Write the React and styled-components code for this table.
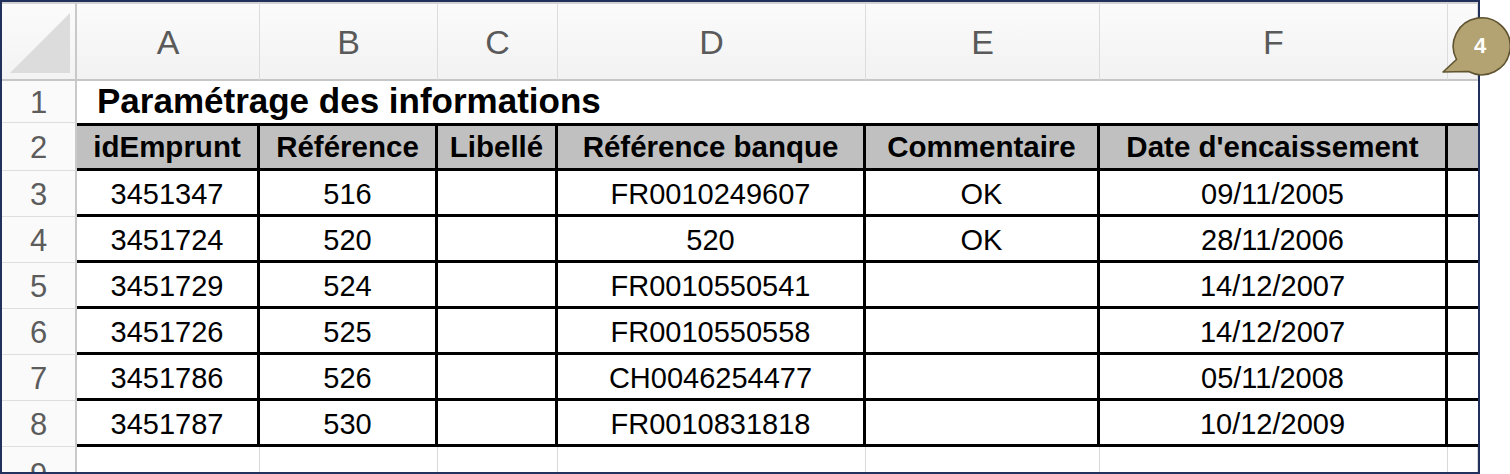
import React from 'react';
import styled, { createGlobalStyle } from 'styled-components';

const GlobalStyle = createGlobalStyle`
  body {
    margin: 0;
    background: #ffffff;
    font-family: "Liberation Sans", Arial, sans-serif;
  }
`;

const letters = ['A', 'B', 'C', 'D', 'E', 'F', ''];
const headers = [
  'idEmprunt',
  'Référence',
  'Libellé',
  'Référence banque',
  'Commentaire',
  "Date d'encaissement",
  '',
];
const rows = [
  ['3451347', '516', '', 'FR0010249607', 'OK', '09/11/2005', ''],
  ['3451724', '520', '', '520', 'OK', '28/11/2006', ''],
  ['3451729', '524', '', 'FR0010550541', '', '14/12/2007', ''],
  ['3451726', '525', '', 'FR0010550558', '', '14/12/2007', ''],
  ['3451786', '526', '', 'CH0046254477', '', '05/11/2008', ''],
  ['3451787', '530', '', 'FR0010831818', '', '10/12/2009', ''],
];

function App() {
  const lastCol = letters.length - 1;
  return (
    <Page>
      <GlobalStyle />
      <Sheet>
        <Corner>
          <svg width="64" height="64" viewBox="0 0 64 64">
            <polygon points="62,2 62,62 2,62" fill="#dcdcdc" />
          </svg>
        </Corner>
        {letters.map((l, i) => (
          <ColHead key={`h${i}`}>{l}</ColHead>
        ))}

        <RowHead>1</RowHead>
        <Title>Paramétrage des informations</Title>

        <RowHead>2</RowHead>
        {headers.map((h, i) => (
          <TableCell key={`t${i}`} $head $top $last={i === lastCol}>
            {h}
          </TableCell>
        ))}

        {rows.map((r, ri) => (
          <React.Fragment key={`r${ri}`}>
            <RowHead>{ri + 3}</RowHead>
            {r.map((v, ci) => (
              <TableCell key={`c${ci}`} $last={ci === lastCol}>
                {v}
              </TableCell>
            ))}
          </React.Fragment>
        ))}

        <RowHead $cut>9</RowHead>
        {letters.map((l, i) => (
          <EmptyCell key={`e${i}`} />
        ))}
      </Sheet>
      <Badge>
        <svg width="72" height="70" viewBox="0 0 72 70">
          <path
            d="M 18.5 49.5 A 28.5 28.5 0 1 1 30.5 61.5 L 5 62 Z"
            fill="#b3a373"
            stroke="#5f5330"
            strokeWidth="1.6"
            strokeLinejoin="round"
          />
          <text
            x="42"
            y="43"
            textAnchor="middle"
            fill="#ffffff"
            fontFamily="Liberation Sans, Arial, sans-serif"
            fontWeight="700"
            fontSize="22"
          >
            4
          </text>
        </svg>
      </Badge>
    </Page>
  );
}

const Page = styled.div`
  position: relative;
  width: 1510px;
  height: 474px;
  overflow: hidden;
`;
const Sheet = styled.div`
  box-sizing: border-box;
  width: 1480px;
  height: 474px;
  border: 2px solid #22305c;
  display: grid;
  grid-template-columns: 75px 183px 178px 120px 308px 234px 348px 1fr;
  grid-template-rows: 79px 42px 48px repeat(6, 46px) 1fr;
  overflow: hidden;
  background: #ffffff;
`;
const Corner = styled.div`
  box-sizing: border-box;
  background: linear-gradient(#fbfbfb, #f3f3f3);
  border-top: 2px solid #d2d2d2;
  border-right: 2px solid #c9c9c9;
  border-bottom: 2px solid #c6c6c6;
  display: flex;
  align-items: flex-end;
  justify-content: flex-end;
  padding: 0 3px 4px 0;
`;
const ColHead = styled.div`
  box-sizing: border-box;
  background: linear-gradient(#fbfbfb, #f2f2f2);
  border-top: 2px solid #d2d2d2;
  border-right: 1px solid #dcdcdc;
  border-bottom: 2px solid #c6c6c6;
  display: flex;
  align-items: center;
  justify-content: center;
  font-size: 34px;
  color: #5a5a5a;
  padding-top: 2px;
`;
const RowHead = styled.div`
  box-sizing: border-box;
  background: #fafafa;
  border-right: 2px solid #c9c9c9;
  border-bottom: 1px solid #dedede;
  display: flex;
  align-items: ${(p) => (p.$cut ? 'flex-start' : 'center')};
  justify-content: center;
  font-size: 31px;
  color: #5c5c5c;
  padding-top: ${(p) => (p.$cut ? '10px' : '2px')};
`;
const Title = styled.div`
  grid-column: 2 / -1;
  display: flex;
  align-items: flex-end;
  padding: 0 0 2px 20px;
  font-size: 35px;
  font-weight: 700;
  color: #000000;
  white-space: nowrap;
`;
const TableCell = styled.div`
  box-sizing: border-box;
  background: ${(p) => (p.$head ? '#c0c0c0' : '#ffffff')};
  border-top: ${(p) => (p.$top ? '3px solid #000' : 'none')};
  border-bottom: 3px solid #000;
  border-right: ${(p) => (p.$last ? 'none' : '3px solid #000')};
  display: flex;
  align-items: center;
  justify-content: center;
  font-size: ${(p) => (p.$head ? '29.5px' : '29px')};
  font-weight: ${(p) => (p.$head ? 700 : 400)};
  color: #000000;
  white-space: nowrap;
  padding-top: ${(p) => (p.$head ? '0' : '3px')};
`;
const EmptyCell = styled.div`
  box-sizing: border-box;
  border-right: 1px solid #d9d9d9;
`;
const Badge = styled.div`
  position: absolute;
  left: 1438px;
  top: 10px;
  width: 72px;
  height: 70px;
  display: flex;
`;

export default App;
